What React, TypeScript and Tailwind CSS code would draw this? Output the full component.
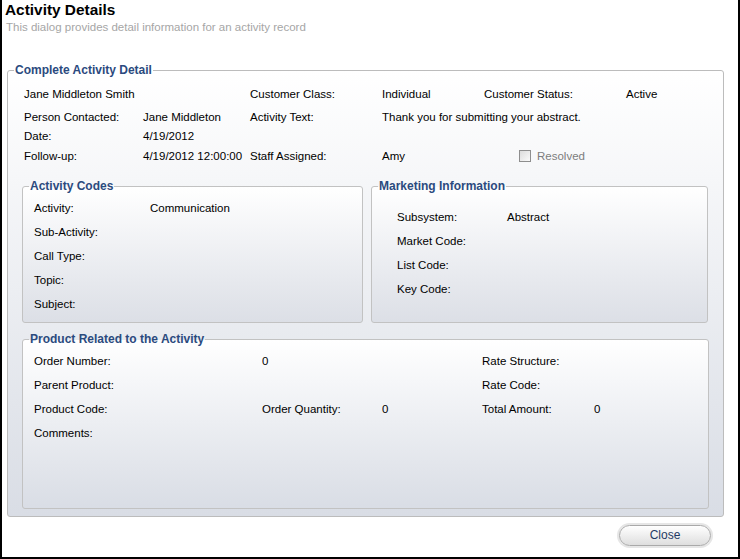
import React from "react";

function Legend({ children }: { children: React.ReactNode }) {
  return (
    <legend className="ml-[6px] px-[1px] text-[12px] font-bold leading-[14px] text-[#2b4a7e]">
      {children}
    </legend>
  );
}

function Row({ cells, widths }: { cells: (React.ReactNode | null)[]; widths: number[] }) {
  return (
    <div className="flex h-[24px] items-center leading-[14px]">
      {cells.map((c, i) => (
        <div key={i} style={{ width: widths[i] }} className="shrink-0 whitespace-nowrap">
          {c}
        </div>
      ))}
    </div>
  );
}

export default function App() {
  const topW = [119, 107, 132, 102, 142];
  const actW = [116, 200];
  const mktW = [110, 200];
  const prodW = [228, 120, 100, 112];
  return (
    <div className="flex h-[559px] w-[740px] flex-col border-b-2 border-l-2 border-r-2 border-black bg-white font-['Liberation_Sans',Arial,sans-serif] text-[11.5px] text-black">
      <div className="h-[20px] pl-[3px] text-[15.4px] font-bold leading-[20px]">Activity Details</div>
      <div className="h-[14px] pl-[4px] text-[11.5px] leading-[14px] text-[#a6a6a6]">
        This dialog provides detail information for an activity record
      </div>

      <fieldset className="ml-[5px] mt-[29px] w-[717px] rounded-[3px] border border-[#bcbcbc] bg-gradient-to-b from-[#ffffff] to-[#d9dde5] pb-[7px]">
        <Legend>Complete Activity Detail</Legend>
        <div className="pl-[16px] pt-[10px]">
          <div className="flex h-[14px] items-center leading-[14px]">
            <div className="w-[226px] shrink-0">Jane Middleton Smith</div>
            <div className="w-[132px] shrink-0">Customer Class:</div>
            <div className="w-[102px] shrink-0">Individual</div>
            <div className="w-[142px] shrink-0">Customer Status:</div>
            <div>Active</div>
          </div>
          <div className="mt-[9px] flex h-[14px] items-center leading-[14px]">
            <div style={{ width: topW[0] }} className="shrink-0">Person Contacted:</div>
            <div style={{ width: topW[1] }} className="shrink-0">Jane Middleton</div>
            <div style={{ width: topW[2] }} className="shrink-0">Activity Text:</div>
            <div className="whitespace-nowrap">Thank you for submitting your abstract.</div>
          </div>
          <div className="mt-[5px] flex h-[14px] items-center leading-[14px]">
            <div style={{ width: topW[0] }} className="shrink-0">Date:</div>
            <div style={{ width: topW[1] }} className="shrink-0">4/19/2012</div>
          </div>
          <div className="mt-[6px] flex h-[14px] items-center leading-[14px]">
            <div style={{ width: topW[0] }} className="shrink-0">Follow-up:</div>
            <div style={{ width: topW[1] }} className="shrink-0 whitespace-nowrap">4/19/2012 12:00:00</div>
            <div style={{ width: topW[2] }} className="shrink-0">Staff Assigned:</div>
            <div style={{ width: topW[3] }} className="shrink-0">Amy</div>
            <div className="flex items-center pl-[35px]">
              <span className="h-[12px] w-[12px] border border-[#8e8e8e] bg-gradient-to-br from-[#dcdcdc] to-[#fafafa]" />
              <span className="ml-[6px] text-[#7d7d7d]">Resolved</span>
            </div>
          </div>
        </div>

        <div className="ml-[14px] mt-[16px] flex gap-[8px]">
          <fieldset className="w-[341px] rounded-[3px] border border-[#c2c2c2] bg-gradient-to-b from-[#ffffff] to-[#dcdfe6]">
            <Legend>Activity Codes</Legend>
            <div className="h-[129px] pl-[11px] pt-[3px]">
              <Row cells={["Activity:", "Communication"]} widths={actW} />
              <Row cells={["Sub-Activity:", null]} widths={actW} />
              <Row cells={["Call Type:", null]} widths={actW} />
              <Row cells={["Topic:", null]} widths={actW} />
              <Row cells={["Subject:", null]} widths={actW} />
            </div>
          </fieldset>
          <fieldset className="w-[335px] rounded-[3px] border border-[#c2c2c2] bg-gradient-to-b from-[#ffffff] to-[#dcdfe6]">
            <Legend>Marketing Information</Legend>
            <div className="h-[129px] pl-[25px] pt-[12px]">
              <Row cells={["Subsystem:", "Abstract"]} widths={mktW} />
              <Row cells={["Market Code:", null]} widths={mktW} />
              <Row cells={["List Code:", null]} widths={mktW} />
              <Row cells={["Key Code:", null]} widths={mktW} />
            </div>
          </fieldset>
        </div>

        <fieldset className="ml-[14px] mt-[9px] w-[687px] rounded-[3px] border border-[#c2c2c2] bg-gradient-to-b from-[#ffffff] to-[#d9dde5]">
          <Legend>Product Related to the Activity</Legend>
          <div className="h-[162px] pl-[11px] pt-[3px]">
            <Row cells={["Order Number:", "0", null, "Rate Structure:", null]} widths={prodW} />
            <Row cells={["Parent Product:", null, null, "Rate Code:", null]} widths={prodW} />
            <Row cells={["Product Code:", "Order Quantity:", "0", "Total Amount:", "0"]} widths={prodW} />
            <Row cells={["Comments:", null]} widths={prodW} />
          </div>
        </fieldset>
      </fieldset>

      <div className="mr-[27px] mt-[8px] flex justify-end">
        <button className="h-[21px] w-[92px] rounded-full border border-[#a9a9a9] bg-gradient-to-b from-[#ffffff] to-[#dedede] text-[12px] leading-[19px] text-[#1f3a66] shadow-[0_0_0_2px_#e6e6e6]">
          Close
        </button>
      </div>
    </div>
  );
}
